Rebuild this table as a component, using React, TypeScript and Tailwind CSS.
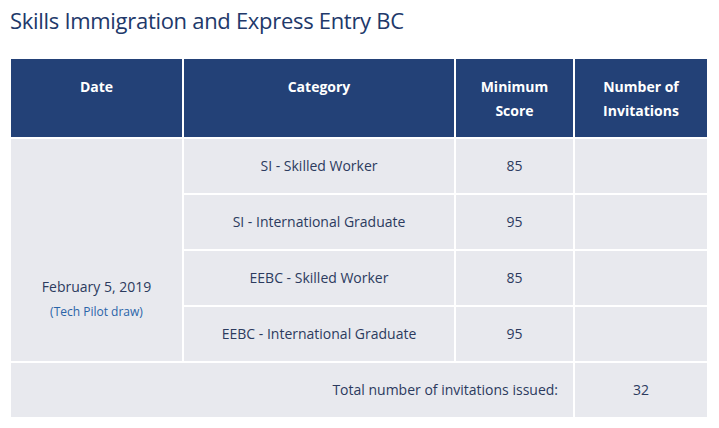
import React from 'react';

const ROWS = [
  { category: 'SI - Skilled Worker', score: '85' },
  { category: 'SI - International Graduate', score: '95' },
  { category: 'EEBC - Skilled Worker', score: '85' },
  { category: 'EEBC - International Graduate', score: '95' },
];

const App: React.FC = () => {
  return (
    <div className="min-h-screen bg-white pl-[9px] pt-[4px] text-[#2c3b5e]" style={{ fontFamily: '"Open Sans", "Noto Sans", sans-serif' }}>
      <h2 className="text-[22px] leading-[32px] tracking-[-0.3px] text-[#21386a] mb-[21px] pl-[1px]">Skills Immigration and Express Entry BC</h2>

      <table className="table-fixed border-separate border-spacing-[2px] w-[700px]">
        <colgroup>
          <col className="w-[171px]" />
          <col className="w-[270px]" />
          <col className="w-[117px]" />
          <col className="w-[132px]" />
        </colgroup>
        <thead>
          <tr className="h-[78px] bg-[#234177] text-white text-[14px] font-bold leading-[24px]">
            <th className="align-top pt-[16px] bg-[#234177]">Date</th>
            <th className="align-top pt-[16px] bg-[#234177]">Category</th>
            <th className="align-top pt-[16px] bg-[#234177]">Minimum<br />Score</th>
            <th className="align-top pt-[16px] bg-[#234177]">Number of<br />Invitations</th>
          </tr>
        </thead>
        <tbody className="text-[14px] leading-[24px]">
          {ROWS.map((row, idx) => (
            <tr key={idx} className="h-[54px]">
              {idx === 0 && (
                <td rowSpan={4} className="bg-[#e8e9ee] text-center align-top pt-[136px]">
                  <div>February 5, 2019</div>
                  <div className="text-[12px] leading-[25px] text-[#2a64a8]">(Tech Pilot draw)</div>
                </td>
              )}
              <td className="bg-[#e8e9ee] text-center align-middle">{row.category}</td>
              <td className="bg-[#e8e9ee] text-center align-middle">{row.score}</td>
              <td className="bg-[#e8e9ee]"></td>
            </tr>
          ))}
          <tr className="h-[54px]">
            <td colSpan={3} className="bg-[#e8e9ee] text-right align-middle pr-[15px]">Total number of invitations issued:</td>
            <td className="bg-[#e8e9ee] text-center align-middle">32</td>
          </tr>
        </tbody>
      </table>
    </div>
  );
};

export default App;
